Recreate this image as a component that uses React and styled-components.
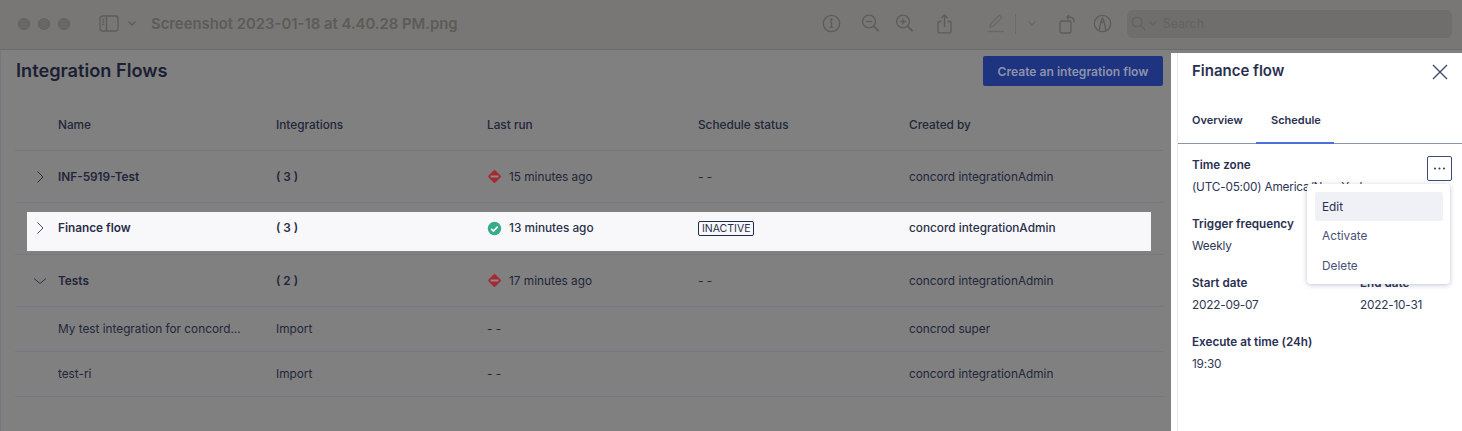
import React from "react";
import styled, { createGlobalStyle } from "styled-components";

const GlobalStyle = createGlobalStyle`
  html, body {
    margin: 0;
    padding: 0;
    background: #808080;
  }
  * {
    box-sizing: border-box;
  }
`;

const Page = styled.div`
  width: 1462px;
  height: 431px;
  overflow: hidden;
  display: flex;
  flex-direction: column;
  background: #808080;
  font-family: "Inter", "Open Sans", sans-serif;
  color: #22263a;
`;

// mac preview window bar
const TitleBar = styled.div`
  flex: none;
  height: 50px;
  display: flex;
  align-items: center;
  padding: 0 10px 2px 18px;
  background: #787775;
  border-bottom: 1px solid #6b6b6b;
`;

const Lights = styled.div`
  display: flex;
  gap: 8px;
`;

const Light = styled.span`
  width: 12px;
  height: 12px;
  border-radius: 50%;
  background: #686765;
  border: 1px solid #62615f;
`;

const FileName = styled.div`
  margin-left: 14px;
  font-size: 14.85px;
  font-weight: 600;
  color: #5c5b59;
  white-space: nowrap;
`;

const Tool = styled.span`
  display: flex;
  margin-left: ${(p) => p.$gap}px;
  color: ${(p) => p.$color || "#5d5c5a"};
`;

const SearchBox = styled.div`
  margin-left: 15px;
  width: 325px;
  height: 28px;
  display: flex;
  align-items: center;
  padding-left: 4px;
  gap: 1px;
  border-radius: 6px;
  background: #6f6e6c;
  color: #636260;
  font-size: 12.5px;
`;

const SearchLabel = styled.span`
  margin-left: 4px;
`;

const Body = styled.div`
  flex: 1;
  display: flex;
  min-height: 0;
`;

const Main = styled.main`
  width: 1171px;
  flex: none;
  padding: 6px 8px 0 14px;
  border-left: 1px solid #757884;
`;

const MainHead = styled.div`
  display: flex;
  justify-content: space-between;
  align-items: flex-start;
  height: 42px;
`;

const PageTitle = styled.h1`
  margin: 2px 0 0 1px;
  font-size: 18.2px;
  line-height: 24px;
  font-weight: 600;
  color: #1b1f33;
`;

const CreateButton = styled.button`
  width: 180px;
  height: 30px;
  border: none;
  border-radius: 2px;
  background: #1e3480;
  color: #8d93aa;
  font-family: inherit;
  font-size: 12.1px;
  font-weight: 600;
`;

const Row = styled.div`
  height: ${(p) => p.$h}px;
  padding: ${(p) => (p.$active ? "9px 12px 3px" : p.$head ? "2px 12px 0" : "0 12px")};
  border-bottom: 1px solid ${(p) => (p.$head ? "#747680" : "#757783")};
`;

const Cells = styled.div`
  height: 100%;
  display: grid;
  grid-template-columns: 31px 218px 211px 211px 211px 1fr;
  align-items: center;
  padding-bottom: ${(p) => (p.$active ? 7 : 0)}px;
  background: ${(p) => (p.$active ? "#f8f8fb" : "transparent")};
  font-size: 11.8px;
  color: ${(p) => (p.$active ? "#2a2f48" : "#22263a")};
`;

const Cell = styled.div`
  display: flex;
  align-items: center;
  gap: 7px;
  white-space: nowrap;
  font-weight: ${(p) => p.$weight || "inherit"};
`;

const Toggle = styled.span`
  display: flex;
  justify-content: center;
  width: 26px;
`;

const Tag = styled.span`
  padding: 0 3px;
  height: 15px;
  line-height: 13px;
  font-size: 10.5px;
  font-weight: 400;
  border: 1px solid #1f2a4d;
  border-radius: 2px;
  color: #2a2f48;
  background: #f8f8fb;
`;

const Panel = styled.aside`
  flex: 1;
  margin-top: 3px;
  padding-left: 6px;
  background: #fff;
`;

const PanelInner = styled.div`
  height: 100%;
  border-left: 1px solid #e7e9f2;
`;

const PanelHead = styled.div`
  height: 60px;
  display: flex;
  justify-content: space-between;
  padding: 8px 14px 0 14px;
`;

const PanelTitle = styled.h2`
  margin: 0;
  font-size: 15px;
  line-height: 20px;
  font-weight: 600;
  color: #2a3050;
`;

const CloseIcon = styled.span`
  display: flex;
  color: #3c4566;
  margin-top: 3px;
`;

const Tabs = styled.div`
  height: 31px;
  display: flex;
  border-bottom: 1px solid #8c93ad;
`;

const Tab = styled.div`
  width: ${(p) => p.$w}px;
  padding-left: ${(p) => p.$pad}px;
  height: 31px;
  font-size: 11px;
  font-weight: 600;
  line-height: 14px;
  color: #2a3050;
  border-bottom: ${(p) => (p.$active ? "2px solid #4a6fdc" : "none")};
`;

const Details = styled.div`
  position: relative;
  padding: 14px 0 0 14px;
  display: flex;
  flex-direction: column;
  gap: 22px;
`;

const FieldRow = styled.div`
  display: flex;
`;

const Field = styled.div`
  width: ${(p) => p.$w || "auto"};
  display: flex;
  flex-direction: column;
  gap: 7px;
`;

const Label = styled.div`
  font-size: 11.7px;
  line-height: 15px;
  font-weight: 600;
  color: #2a3050;
  white-space: nowrap;
`;

const Value = styled.div`
  font-size: 11.8px;
  line-height: 15px;
  letter-spacing: -0.2px;
  color: #2f3654;
  white-space: nowrap;
`;

const DotsButton = styled.div`
  position: absolute;
  top: 12px;
  right: 10px;
  width: 25px;
  height: 25px;
  display: flex;
  align-items: center;
  justify-content: center;
  border: 1px solid #3f4a7a;
  border-radius: 2px;
  background: #fff;
  color: #2a3050;
`;

const Menu = styled.div`
  position: absolute;
  top: 40px;
  right: 12px;
  width: 143px;
  height: 100px;
  padding: 8px 7px 0 8px;
  display: flex;
  flex-direction: column;
  background: #fff;
  border-radius: 4px;
  box-shadow: 0 1px 5px rgba(50, 60, 110, 0.3);
`;

const MenuItem = styled.div`
  height: ${(p) => (p.$first ? 29 : 29.8)}px;
  flex: none;
  display: flex;
  align-items: center;
  padding-left: 7px;
  font-size: 11.8px;
  border-radius: 2px;
  color: ${(p) => (p.$first ? "#2a3050" : "#485075")};
  background: ${(p) => (p.$first ? "#f0f1f6" : "transparent")};
`;

const Chevron = ({ open, color = "#2d3145" }) => (
  <svg width="14" height="14" viewBox="0 0 14 14" fill="none" stroke={color} strokeWidth="1">
    <path d={open ? "M1 4.5 7 9.5l6-5" : "M4.5 1.5 10 7l-5.5 5.5"} />
  </svg>
);

const BlockedIcon = () => (
  <svg width="15" height="15" viewBox="0 0 15 15">
    <rect x="2.6" y="2.6" width="9.8" height="9.8" rx="1.4" fill="#a32a33" transform="rotate(45 7.5 7.5)" />
    <rect x="3.6" y="6.5" width="7.8" height="2" fill="#8a8a8c" />
  </svg>
);

const CheckIcon = () => (
  <svg width="15" height="15" viewBox="0 0 15 15">
    <circle cx="7.5" cy="7.5" r="6.7" fill="#35ad88" />
    <path d="M4.2 7.8 6.5 10l4.2-4.4" fill="none" stroke="#fff" strokeWidth="1.6" />
  </svg>
);

const stroke = { fill: "none", stroke: "currentColor", strokeWidth: 1.3 };

const SidebarIcon = () => (
  <svg width="20" height="17" viewBox="0 0 20 17" {...stroke}>
    <rect x="1" y="1" width="18" height="15" rx="2.5" />
    <path d="M7.5 1v15M3.2 4.5h2M3.2 7h2M3.2 9.5h2" />
  </svg>
);

const SmallChevron = () => (
  <svg width="10" height="7" viewBox="0 0 10 7" {...stroke}>
    <path d="M1.5 1.5 5 5l3.5-3.5" />
  </svg>
);

const InfoIcon = () => (
  <svg width="19" height="19" viewBox="0 0 19 19" {...stroke}>
    <circle cx="9.5" cy="9.5" r="8.2" />
    <path d="M9.5 8v5.2M7.8 13.4h3.4M8 8h1.5" />
    <circle cx="9.4" cy="5.4" r="0.6" />
  </svg>
);

const ZoomIcon = ({ plus }) => (
  <svg width="19" height="19" viewBox="0 0 19 19" {...stroke}>
    <circle cx="8" cy="7.5" r="6.4" />
    <path d="m12.6 12.2 5 5" strokeWidth="1.8" />
    <path d={plus ? "M5.2 7.5h5.6M8 4.7v5.6" : "M5 7.5h6"} />
  </svg>
);

const ShareIcon = () => (
  <svg width="15" height="20" viewBox="0 0 15 20" {...stroke}>
    <path d="M7.5 13V1.2M4.4 4 7.5 1l3.1 3" />
    <path d="M4.5 7.5H2.2A1.2 1.2 0 0 0 1 8.7v9a1.2 1.2 0 0 0 1.2 1.2h10.6a1.2 1.2 0 0 0 1.2-1.2v-9a1.2 1.2 0 0 0-1.2-1.2h-2.3" />
  </svg>
);

const PencilIcon = () => (
  <svg width="18" height="19" viewBox="0 0 18 19" {...stroke}>
    <path d="m3 13 1-3.4L12.4 1.2l2.4 2.4L6.4 12Z" />
    <path d="M0.5 17.5h16.5" />
  </svg>
);

const Divider = styled.span`
  width: 1px;
  height: 20px;
  margin-left: 10px;
  background: #6b6a68;
`;

const RotateIcon = () => (
  <svg width="17" height="20" viewBox="0 0 17 20" {...stroke}>
    <rect x="1" y="7" width="11" height="12" rx="1.5" />
    <path d="M8 3.2h3.5a3.5 3.5 0 0 1 3.5 3.5v1.8M10 1 7.8 3.2 10 5.4" />
  </svg>
);

const MarkupIcon = () => (
  <svg width="19" height="19" viewBox="0 0 19 19" {...stroke}>
    <circle cx="9.5" cy="9.5" r="8.2" />
    <path d="m6.2 16 2-9.5 1.3-2.4 1.3 2.4 2 9.5M8 8h3" />
  </svg>
);

const SearchGlyph = () => (
  <svg width="16" height="15" viewBox="0 0 16 15" {...stroke}>
    <circle cx="6" cy="6" r="4.8" />
    <path d="m9.5 9.5 4.5 4.5" />
  </svg>
);

const CloseGlyph = () => (
  <svg width="16" height="16" viewBox="0 0 16 16" fill="none" stroke="currentColor" strokeWidth="1.3">
    <path d="M1 1l14 14M15 1 1 15" />
  </svg>
);

const DotsGlyph = () => (
  <svg width="13" height="3" viewBox="0 0 13 3" fill="currentColor">
    <circle cx="2" cy="1.5" r="1" />
    <circle cx="6.5" cy="1.5" r="1" />
    <circle cx="11" cy="1.5" r="1" />
  </svg>
);

const flows = [
  { name: "INF-5919-Test", integrations: "( 3 )", toggle: "closed", ok: false, run: "15 minutes ago", status: "- -", by: "concord integrationAdmin", h: 52 },
  { name: "Finance flow", integrations: "( 3 )", toggle: "closed", ok: true, run: "13 minutes ago", tag: "INACTIVE", by: "concord integrationAdmin", h: 52, active: true },
  { name: "Tests", integrations: "( 2 )", toggle: "open", ok: false, run: "17 minutes ago", status: "- -", by: "concord integrationAdmin", h: 52 },
  { name: "My test integration for concord...", integrations: "Import", plain: true, run: "- -", by: "concrod super", h: 45 },
  { name: "test-ri", integrations: "Import", plain: true, run: "- -", by: "concord integrationAdmin", h: 45 },
];

function FlowRow({ flow }) {
  const strong = flow.active ? 500 : 400;
  return (
    <Row $h={flow.h} $active={flow.active}>
      <Cells $active={flow.active}>
        <Toggle>
          {flow.toggle && <Chevron open={flow.toggle === "open"} color={flow.active ? "#4a5170" : "#2d3145"} />}
        </Toggle>
        <Cell $weight={flow.plain ? 400 : 600}>{flow.name}</Cell>
        <Cell $weight={flow.plain ? 400 : 600}>{flow.integrations}</Cell>
        <Cell $weight={strong}>
          {!flow.plain && (flow.ok ? <CheckIcon /> : <BlockedIcon />)}
          {flow.run}
        </Cell>
        <Cell $weight={strong}>{flow.tag ? <Tag>{flow.tag}</Tag> : flow.status}</Cell>
        <Cell $weight={strong}>{flow.by}</Cell>
      </Cells>
    </Row>
  );
}

export default function App() {
  return (
    <Page>
      <GlobalStyle />
      <TitleBar>
        <Lights>
          <Light />
          <Light />
          <Light />
        </Lights>
        <Tool $gap={29}><SidebarIcon /></Tool>
        <Tool $gap={8}><SmallChevron /></Tool>
        <FileName>Screenshot 2023-01-18 at 4.40.28 PM.png</FileName>
        <Tool $gap={364}><InfoIcon /></Tool>
        <Tool $gap={20}><ZoomIcon /></Tool>
        <Tool $gap={15}><ZoomIcon plus /></Tool>
        <Tool $gap={23}><ShareIcon /></Tool>
        <Tool $gap={35} $color="#686765"><PencilIcon /></Tool>
        <Divider />
        <Tool $gap={11} $color="#686765"><SmallChevron /></Tool>
        <Tool $gap={22}><RotateIcon /></Tool>
        <Tool $gap={17}><MarkupIcon /></Tool>
        <SearchBox>
          <SearchGlyph />
          <SmallChevron />
          <SearchLabel>Search</SearchLabel>
        </SearchBox>
      </TitleBar>
      <Body>
        <Main>
          <MainHead>
            <PageTitle>Integration Flows</PageTitle>
            <CreateButton>Create an integration flow</CreateButton>
          </MainHead>
          <Row $h={53} $head>
            <Cells>
              <span />
              <Cell $weight={500}>Name</Cell>
              <Cell $weight={500}>Integrations</Cell>
              <Cell $weight={500}>Last run</Cell>
              <Cell $weight={500}>Schedule status</Cell>
              <Cell $weight={500}>Created by</Cell>
            </Cells>
          </Row>
          {flows.map((flow) => (
            <FlowRow key={flow.name} flow={flow} />
          ))}
        </Main>
        <Panel>
          <PanelInner>
            <PanelHead>
              <PanelTitle>Finance flow</PanelTitle>
              <CloseIcon><CloseGlyph /></CloseIcon>
            </PanelHead>
            <Tabs>
              <Tab $w={78} $pad={14}>Overview</Tab>
              <Tab $w={78} $pad={15} $active>Schedule</Tab>
            </Tabs>
            <Details>
              <Field>
                <Label>Time zone</Label>
                <Value>(UTC-05:00) America/New York</Value>
              </Field>
              <Field>
                <Label>Trigger frequency</Label>
                <Value>Weekly</Value>
              </Field>
              <FieldRow>
                <Field $w="168px">
                  <Label>Start date</Label>
                  <Value>2022-09-07</Value>
                </Field>
                <Field>
                  <Label>End date</Label>
                  <Value>2022-10-31</Value>
                </Field>
              </FieldRow>
              <Field>
                <Label>Execute at time (24h)</Label>
                <Value>19:30</Value>
              </Field>
              <DotsButton><DotsGlyph /></DotsButton>
              <Menu>
                <MenuItem $first>Edit</MenuItem>
                <MenuItem>Activate</MenuItem>
                <MenuItem>Delete</MenuItem>
              </Menu>
            </Details>
          </PanelInner>
        </Panel>
      </Body>
    </Page>
  );
}
